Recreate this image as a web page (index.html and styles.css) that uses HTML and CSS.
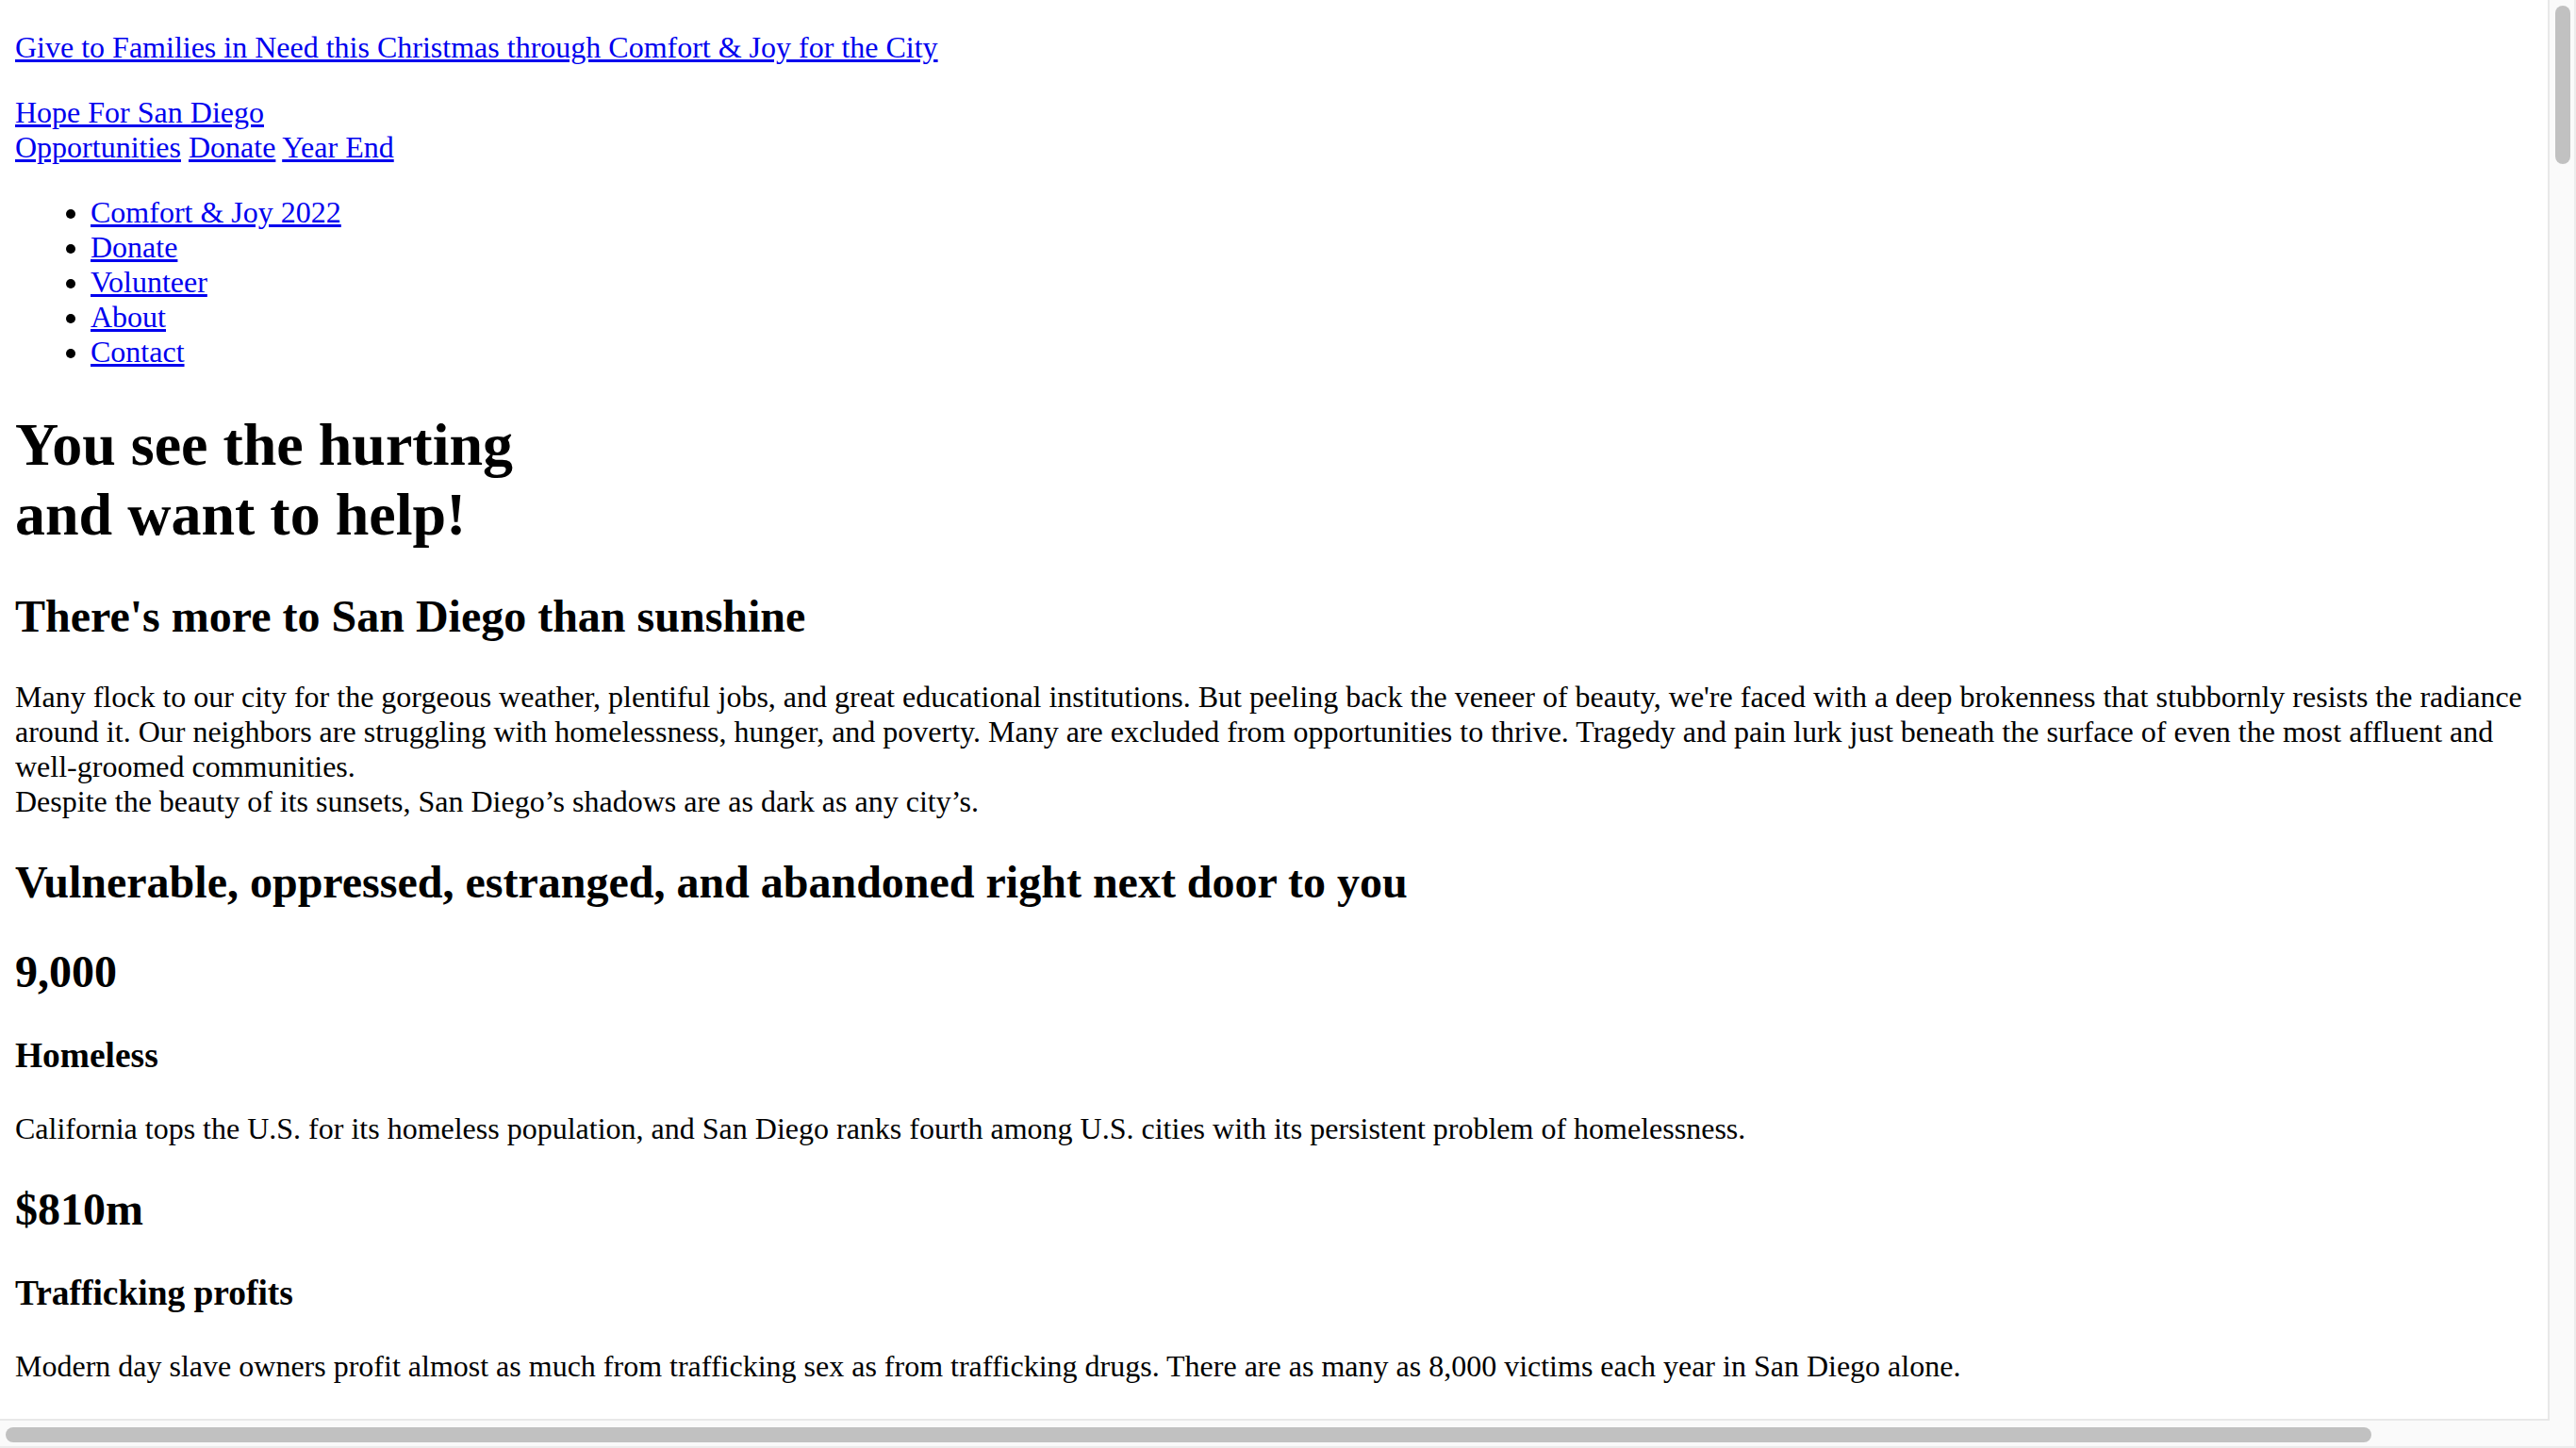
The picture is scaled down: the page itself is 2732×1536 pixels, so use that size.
FILE: index.html
```html
<!DOCTYPE html>
<html lang="en">
<head>
<meta charset="utf-8">
<title>Hope For San Diego</title>
<link rel="stylesheet" href="styles.css">
</head>
<body>
<p class="promo"><a href="#">Give to Families in Need this Christmas through Comfort &amp; Joy for the City</a></p>
<div class="brand"><a href="#">Hope For San Diego</a></div>
<div class="quick"><a href="#">Opportunities</a> <a href="#">Donate</a> <a href="#">Year End</a></div>
<ul class="menu">
  <li><a href="#">Comfort &amp; Joy 2022</a></li>
  <li><a href="#">Donate</a></li>
  <li><a href="#">Volunteer</a></li>
  <li><a href="#">About</a></li>
  <li><a href="#">Contact</a></li>
</ul>
<h1 class="hero">You see the hurting<br>and want to help!</h1>
<h2 class="section-title">There's more to San Diego than sunshine</h2>
<p class="copy">Many flock to our city for the gorgeous weather, plentiful jobs, and great educational institutions. But peeling back the veneer of beauty, we're faced with a deep brokenness that stubbornly resists the radiance around it. Our neighbors are struggling with homelessness, hunger, and poverty. Many are excluded from opportunities to thrive. Tragedy and pain lurk just beneath the surface of even the most affluent and well-groomed communities.<br>Despite the beauty of its sunsets, San Diego’s shadows are as dark as any city’s.</p>
<h2 class="section-title">Vulnerable, oppressed, estranged, and abandoned right next door to you</h2>
<h2 class="stat">9,000</h2>
<h3 class="stat-label">Homeless</h3>
<p class="copy">California tops the U.S. for its homeless population, and San Diego ranks fourth among U.S. cities with its persistent problem of homelessness.</p>
<h2 class="stat">$810m</h2>
<h3 class="stat-label">Trafficking profits</h3>
<p class="copy">Modern day slave owners profit almost as much from trafficking sex as from trafficking drugs. There are as many as 8,000 victims each year in San Diego alone.</p>

<div class="vscroll"><div class="vthumb"></div></div>
<div class="hscroll"><div class="hthumb"></div></div>
<div class="corner"></div>
</body>
</html>
```

FILE: styles.css
```css
html {
  overflow: hidden;
  height: 100%;
  background: #ffffff;
}

body {
  margin: 0 46px 16px 16px;
  font-family: "Liberation Serif", "Times New Roman", serif;
  font-size: 32px;
  color: #000000;
  background: #ffffff;
}

a {
  color: #0000ee;
  text-decoration: underline;
  text-decoration-thickness: 3px;
}

p {
  margin: 32px 0;
}

.menu {
  margin: 32px 0;
  padding-left: 80px;
  list-style: disc;
}

h1 {
  font-size: 64px;
  font-weight: bold;
  margin: 42.88px 0;
}

h2 {
  font-size: 48px;
  font-weight: bold;
  margin: 39.84px 0;
}

h3 {
  font-size: 37.44px;
  font-weight: bold;
  margin: 37.44px 0;
}

/* scrollbars drawn over the page edge */
.vscroll {
  position: fixed;
  top: 0;
  right: 0;
  width: 30px;
  height: 1507px;
  box-sizing: border-box;
  background: #fafafa;
  border-left: 2px solid #e8e8e8;
  border-right: 2px solid #ececec;
}

.vthumb {
  position: absolute;
  top: 6px;
  left: 6px;
  width: 16px;
  height: 168px;
  border-radius: 8px;
  background: #c1c1c1;
}

.hscroll {
  position: fixed;
  left: 0;
  bottom: 0;
  width: 2704px;
  height: 31px;
  box-sizing: border-box;
  background: #fafafa;
  border-top: 2px solid #e8e8e8;
  border-bottom: 2px solid #ececec;
}

.hthumb {
  position: absolute;
  top: 7px;
  left: 6px;
  width: 2509px;
  height: 16px;
  border-radius: 8px;
  background: #c1c1c1;
}

.corner {
  position: fixed;
  right: 0;
  bottom: 0;
  width: 28px;
  height: 29px;
  box-sizing: border-box;
  background: #fafafa;
  border-right: 2px solid #ececec;
  border-bottom: 2px solid #ececec;
}
```
